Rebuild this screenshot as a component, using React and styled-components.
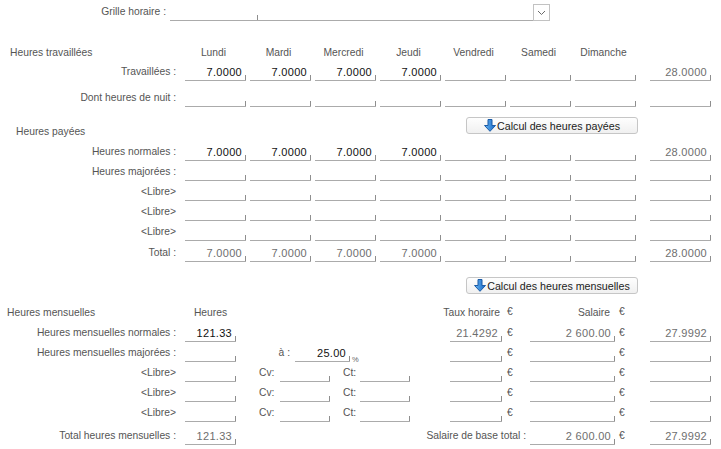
import React from "react";
import styled, { createGlobalStyle, css } from "styled-components";

const GlobalStyle = createGlobalStyle`
  html, body { margin: 0; padding: 0; background: #fff; }
  body {
    font-family: "Liberation Sans", Arial, sans-serif;
    font-size: 10.3px;
    color: #555;
  }
`;

const Page = styled.div`
  width: 721px;
  height: 449px;
  overflow: hidden;
  display: flex;
  flex-direction: column;
`;

const Field = styled.div`
  position: relative;
  box-sizing: border-box;
  width: ${(p) => (p.$w ? `${p.$w}px` : "100%")};
  height: 17px;
  line-height: 16px;
  padding-right: 4px;
  text-align: right;
  white-space: nowrap;
  font-size: 11px;
  letter-spacing: 0.3px;
  border-bottom: 1px solid #ababab;
  color: ${(p) => (p.$muted ? "#6e6e6e" : "#111")};
  justify-self: ${(p) => (p.$end ? "end" : "stretch")};
  ${(p) =>
    !p.$noTick &&
    css`
      &::after {
        content: "";
        position: absolute;
        right: 0;
        bottom: 0;
        width: 1px;
        height: 5px;
        background: #8e8e8e;
      }
    `}
`;

/* top combo */
const TopRow = styled.div`
  display: flex;
  align-items: flex-end;
  height: 21px;
`;

const TopLabel = styled.div`
  width: 166px;
  text-align: right;
  line-height: 16px;
  padding-bottom: 1px;
  margin-right: 4px;
`;

const DropButton = styled.div`
  box-sizing: border-box;
  width: 17px;
  height: 17px;
  border: 1px solid #c2c2c2;
  display: flex;
  align-items: center;
  justify-content: center;
`;

/* day grids */
const DayRow = styled.div`
  display: grid;
  grid-template-columns: 181px repeat(7, 61px) 71px;
  column-gap: 4px;
  align-items: end;
  margin-top: ${(p) => p.$top || 0}px;
`;

const RowLabel = styled.div`
  text-align: right;
  padding-right: ${(p) => p.$pr ?? 5}px;
  line-height: 16px;
  padding-bottom: 1px;
  white-space: nowrap;
`;

const SectionTitle = styled.div`
  padding-left: ${(p) => p.$pl}px;
  line-height: 16px;
  white-space: nowrap;
`;

const DayName = styled.div`
  text-align: center;
  padding-right: 4px;
  line-height: 16px;
`;

const ButtonRow = styled.div`
  display: flex;
  align-items: flex-start;
  margin-top: ${(p) => p.$top || 0}px;
`;

const ButtonRowTitle = styled.div`
  box-sizing: border-box;
  width: 466px;
  padding-left: ${(p) => p.$pl || 0}px;
  padding-top: 7px;
  line-height: 16px;
`;

const CalcButton = styled.button`
  box-sizing: border-box;
  width: 172px;
  height: 17px;
  padding: 0;
  display: flex;
  align-items: center;
  justify-content: center;
  gap: 1px;
  border: 1px solid #c6c6c6;
  border-radius: 3px;
  background: linear-gradient(#fefefe, #f0f0f0);
  font-family: inherit;
  font-size: 10.7px;
  color: #1c1c1c;
`;

/* monthly grid */
const MonthRow = styled.div`
  display: grid;
  grid-template-columns: 185px 51px 214px 52px 28px 85px 35px 61px;
  align-items: end;
  margin-top: ${(p) => p.$top || 0}px;
`;

const Euro = styled.div`
  padding-left: ${(p) => p.$pl}px;
  line-height: 16px;
  padding-bottom: 1px;
  color: #555;
`;

const HeadCell = styled.div`
  grid-column: ${(p) => p.$col || "auto"};
  text-align: ${(p) => p.$align || "left"};
  padding-left: ${(p) => p.$pl || 0}px;
  padding-right: ${(p) => p.$pr || 0}px;
  line-height: 16px;
  padding-bottom: ${(p) => p.$pb || 0}px;
  white-space: nowrap;
`;

const MidCell = styled.div`
  display: flex;
  align-items: flex-end;
  padding-left: ${(p) => p.$pl}px;
`;

const MidLabel = styled.div`
  box-sizing: border-box;
  width: ${(p) => p.$w}px;
  padding-left: ${(p) => p.$pl || 0}px;
  text-align: ${(p) => p.$align || "left"};
  padding-right: ${(p) => p.$pr || 0}px;
  line-height: 16px;
  padding-bottom: 1px;
`;

const Percent = styled.div`
  font-size: 7.5px;
  line-height: 8px;
  margin-left: 2px;
  margin-bottom: -2px;
  color: #666;
`;

const ArrowIcon = ({ id }) => (
  <svg width="12" height="13" viewBox="0 0 12 13">
    <defs>
      <linearGradient id={id} x1="0" x2="1" y1="0" y2="0">
        <stop offset="0" stopColor="#6ab8f2" />
        <stop offset="1" stopColor="#1565c6" />
      </linearGradient>
    </defs>
    <path
      d="M4 0.5h4v6h3.5L6 12.3 0.5 6.5H4z"
      fill={`url(#${id})`}
      stroke="#1b5ba6"
      strokeWidth="1"
      strokeLinejoin="round"
    />
  </svg>
);

const days = ["Lundi", "Mardi", "Mercredi", "Jeudi", "Vendredi", "Samedi", "Dimanche"];
const four = ["7.0000", "7.0000", "7.0000", "7.0000", "", "", ""];
const empty = ["", "", "", "", "", "", ""];

const DayFields = ({ label, values, total, muted }) => (
  <>
    <RowLabel>{label}</RowLabel>
    {values.map((v, i) => (
      <Field key={i} $muted={muted}>
        {v}
      </Field>
    ))}
    <Field $w={61} $end $muted>
      {total}
    </Field>
  </>
);

const MonthLine = ({ label, hours, middle, taux, salaire, total, top }) => (
  <MonthRow $top={top}>
    <RowLabel $pr={9}>{label}</RowLabel>
    <Field>{hours}</Field>
    {middle || <div />}
    <Field $muted>{taux}</Field>
    <Euro $pl={5}>€</Euro>
    <Field $muted>{salaire}</Field>
    <Euro $pl={4}>€</Euro>
    <Field $muted>{total}</Field>
  </MonthRow>
);

const FreeMiddle = () => (
  <MidCell $pl={23}>
    <MidLabel $w={21}>Cv:</MidLabel>
    <Field $w={50} />
    <MidLabel $w={30} $pl={13}>
      Ct:
    </MidLabel>
    <Field $w={50} />
  </MidCell>
);

export default function App() {
  return (
    <Page>
      <GlobalStyle />
      <TopRow>
        <TopLabel>Grille horaire :</TopLabel>
        <Field $w={88} />
        <Field $w={275} $noTick />
        <DropButton>
          <svg width="9" height="6" viewBox="0 0 9 6">
            <path d="M1 1l3.5 3.5L8 1" fill="none" stroke="#6a6a6a" strokeWidth="1" />
          </svg>
        </DropButton>
      </TopRow>

      <DayRow $top={24}>
        <SectionTitle $pl={10}>Heures travaillées</SectionTitle>
        {days.map((d) => (
          <DayName key={d}>{d}</DayName>
        ))}
      </DayRow>
      <DayRow $top={3}>
        <DayFields label="Travaillées :" values={four} total="28.0000" />
      </DayRow>
      <DayRow $top={9}>
        <DayFields label="Dont heures de nuit :" values={empty} total="" />
      </DayRow>

      <ButtonRow $top={10}>
        <ButtonRowTitle $pl={16}>Heures payées</ButtonRowTitle>
        <CalcButton>
          <ArrowIcon id="arrowA" />
          Calcul des heures payées
        </CalcButton>
      </ButtonRow>
      <DayRow $top={4}>
        <DayFields label="Heures normales :" values={four} total="28.0000" />
      </DayRow>
      <DayRow $top={3}>
        <DayFields label="Heures majorées :" values={empty} total="" />
      </DayRow>
      {[0, 1, 2].map((i) => (
        <DayRow key={i} $top={3}>
          <DayFields label="<Libre>" values={empty} total="" />
        </DayRow>
      ))}
      <DayRow $top={4}>
        <DayFields label="Total :" values={four} total="28.0000" muted />
      </DayRow>

      <ButtonRow $top={15}>
        <ButtonRowTitle />
        <CalcButton>
          <ArrowIcon id="arrowB" />
          Calcul des heures mensuelles
        </CalcButton>
      </ButtonRow>

      <MonthRow $top={10}>
        <HeadCell $pl={7}>Heures mensuelles</HeadCell>
        <HeadCell $align="center">Heures</HeadCell>
        <HeadCell $col="3 / 5" $align="right" $pr={2}>
          Taux horaire
        </HeadCell>
        <Euro $pl={5}>€</Euro>
        <HeadCell $align="right" $pr={5}>
          Salaire
        </HeadCell>
        <Euro $pl={4}>€</Euro>
      </MonthRow>
      <MonthLine
        top={4}
        label="Heures mensuelles normales :"
        hours="121.33"
        taux="21.4292"
        salaire="2 600.00"
        total="27.9992"
      />
      <MonthLine
        top={3}
        label="Heures mensuelles majorées :"
        middle={
          <MidCell $pl={0}>
            <MidLabel $w={59} $align="right" $pr={5}>
              à :
            </MidLabel>
            <Field $w={55}>25.00</Field>
            <Percent>%</Percent>
          </MidCell>
        }
      />
      {[0, 1, 2].map((i) => (
        <MonthLine key={i} top={3} label="<Libre>" middle={<FreeMiddle />} />
      ))}
      <MonthRow $top={6}>
        <RowLabel $pr={9}>Total heures mensuelles :</RowLabel>
        <Field $muted>121.33</Field>
        <HeadCell $col="3 / 6" $align="right" $pr={4} $pb={1}>
          Salaire de base total :
        </HeadCell>
        <Field $muted>2 600.00</Field>
        <Euro $pl={4}>€</Euro>
        <Field $muted>27.9992</Field>
      </MonthRow>
    </Page>
  );
}
